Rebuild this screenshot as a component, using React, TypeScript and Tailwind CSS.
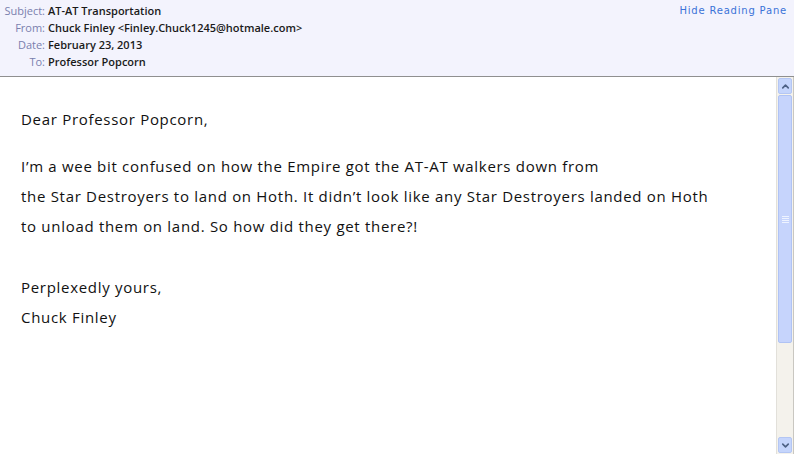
import { ChevronUp, ChevronDown } from "lucide-react";

const headerRows = [
  { label: "Subject:", value: "AT-AT Transportation" },
  { label: "From:", value: "Chuck Finley <Finley.Chuck1245@hotmale.com>" },
  { label: "Date:", value: "February 23, 2013" },
  { label: "To:", value: "Professor Popcorn" },
];

function ScrollBar() {
  return (
    <div className="w-[18px] shrink-0 flex flex-col bg-[#f4f2ec] border-l border-[#e2e0da] border-r border-r-[#c9c7c1] py-[1px]">
      {/* up arrow */}
      <div className="h-[16px] mx-[1px] rounded-[2px] bg-[#c5d5fc] border border-[#b4c6f3] flex items-center justify-center">
        <ChevronUp size={11} strokeWidth={3.5} className="text-[#4d6185]" />
      </div>
      {/* thumb */}
      <div className="h-[248px] mx-[1px] mt-[1px] rounded-[2px] bg-[#c6d4fc] border border-[#b0c3f4] flex items-center justify-center">
        <div className="flex flex-col gap-[1px]">
          <span className="block w-[7px] h-[1px] bg-[#eef3ff]" />
          <span className="block w-[7px] h-[1px] bg-[#eef3ff]" />
          <span className="block w-[7px] h-[1px] bg-[#eef3ff]" />
          <span className="block w-[7px] h-[1px] bg-[#eef3ff]" />
        </div>
      </div>
      <div className="flex-1" />
      {/* down arrow */}
      <div className="h-[16px] mx-[1px] rounded-[2px] bg-[#c5d5fc] border border-[#b4c6f3] flex items-center justify-center">
        <ChevronDown size={11} strokeWidth={3.5} className="text-[#4d6185]" />
      </div>
    </div>
  );
}

export default function App() {
  return (
    <div className="w-[794px] h-[454px] flex flex-col bg-white overflow-hidden">
      {/* message header */}
      <div className="h-[77px] shrink-0 bg-[#f3f3fd] border-b border-[#8f8f8f] flex justify-between pt-[2px]">
        <div className="flex flex-col font-['Open_Sans',sans-serif] text-[11px] leading-[17px]">
          {headerRows.map((row) => (
            <div key={row.label} className="flex">
              <span className="w-[48px] text-right text-[#7a7fae] pr-[3px]">{row.label}</span>
              <span className="text-[#1a1a1a] font-semibold">{row.value}</span>
            </div>
          ))}
        </div>
        <a className="font-['DejaVu_Sans',sans-serif] text-[10px] leading-[17px] text-[#3a72d8] pr-[7px] tracking-[0.8px]">
          Hide Reading Pane
        </a>
      </div>

      {/* message body */}
      <div className="flex-1 flex min-h-0">
        <div className="flex-1 pl-[21px] pt-[27px] font-['Open_Sans',sans-serif] text-[15px] leading-[30px] tracking-[0.7px] text-[#111]">
          <p>Dear Professor Popcorn,</p>
          <p className="mt-[17px]">
            I’m a wee bit confused on how the Empire got the AT-AT walkers down from
            <br />
            the Star Destroyers to land on Hoth. It didn’t look like any Star Destroyers landed on Hoth
            <br />
            to unload them on land. So how did they get there?!
          </p>
          <p className="mt-[31px]">
            Perplexedly yours,
            <br />
            Chuck Finley
          </p>
        </div>
        <ScrollBar />
      </div>
    </div>
  );
}
